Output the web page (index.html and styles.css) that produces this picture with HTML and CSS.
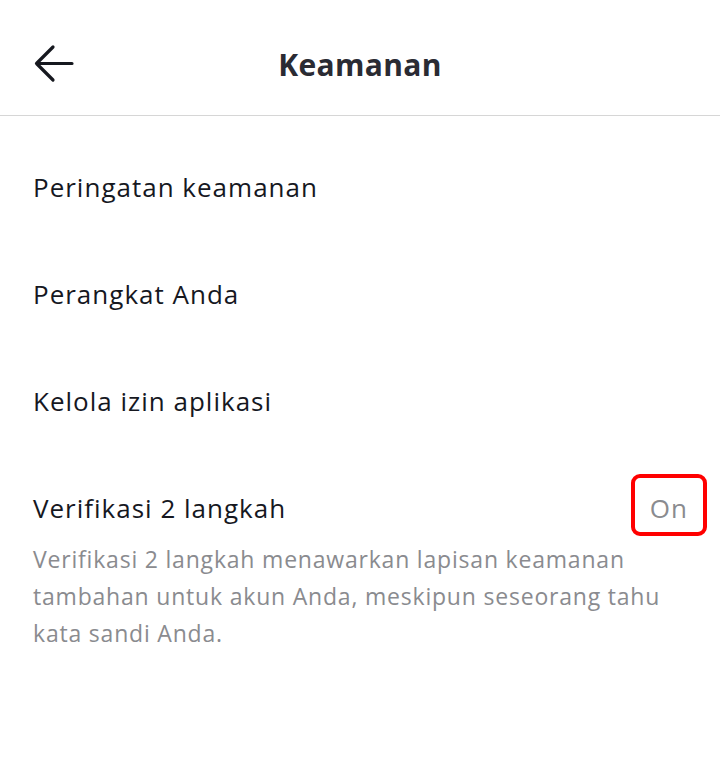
FILE: index.html
```html
<!DOCTYPE html>
<html lang="id">
<head>
    <meta charset="UTF-8">
    <meta name="viewport" content="width=device-width, initial-scale=1.0">
    <title>Keamanan</title>
    <link rel="stylesheet" href="styles.css">
</head>
<body>

    <div class="header">
        <span class="back">
            <svg width="40" height="40" viewBox="0 0 40 40">
                <path d="M19 3 L2.5 19.5 L19 36 M2.5 19.5 H38" fill="none" stroke="#16181f" stroke-width="3.2" stroke-linecap="round" stroke-linejoin="round"/>
            </svg>
        </span>
        <h1>Keamanan</h1>
    </div>

    <div class="list">
        <div class="item">Peringatan keamanan</div>
        <div class="item">Perangkat Anda</div>
        <div class="item">Kelola izin aplikasi</div>
        <div class="item item-toggle">
            <span>Verifikasi 2 langkah</span>
            <span class="status">On</span>
        </div>
        <p class="desc">Verifikasi 2 langkah menawarkan lapisan keamanan tambahan untuk akun Anda, meskipun seseorang tahu kata sandi Anda.</p>
    </div>

</body>
</html>
```

FILE: styles.css
```css
body {
    font-family: 'Open Sans', sans-serif;
    background-color: #fff;
    color: #16181f;
    margin: 0;
}

.header {
    height: 115px;
    border-bottom: 1px solid #d6d6d6;
    display: flex;
    align-items: center;
    justify-content: center;
    position: relative;
}

.back {
    position: absolute;
    left: 34px;
    top: 44px;
    width: 40px;
    height: 40px;
}

h1 {
    margin: 0;
    font-size: 30px;
    font-weight: 700;
    letter-spacing: 0.3px;
    color: #2a2b33;
    padding-top: 14px;
}

.list {
    padding: 17px 32px 0 33px;
}

.item {
    height: 107px;
    display: flex;
    align-items: center;
    font-size: 26px;
    letter-spacing: 1px;
}

.item-toggle {
    justify-content: space-between;
}

.status {
    color: #8a8b8f;
    border: 4px solid #ff0000;
    border-radius: 9px;
    line-height: 30px;
    padding: 15px 15px 9px;
    margin: 0 -19px 6px 0;
}

.desc {
    margin: -20px 0 0;
    font-size: 23px;
    letter-spacing: 0.8px;
    line-height: 37px;
    color: #8a8b8f;
}
```
